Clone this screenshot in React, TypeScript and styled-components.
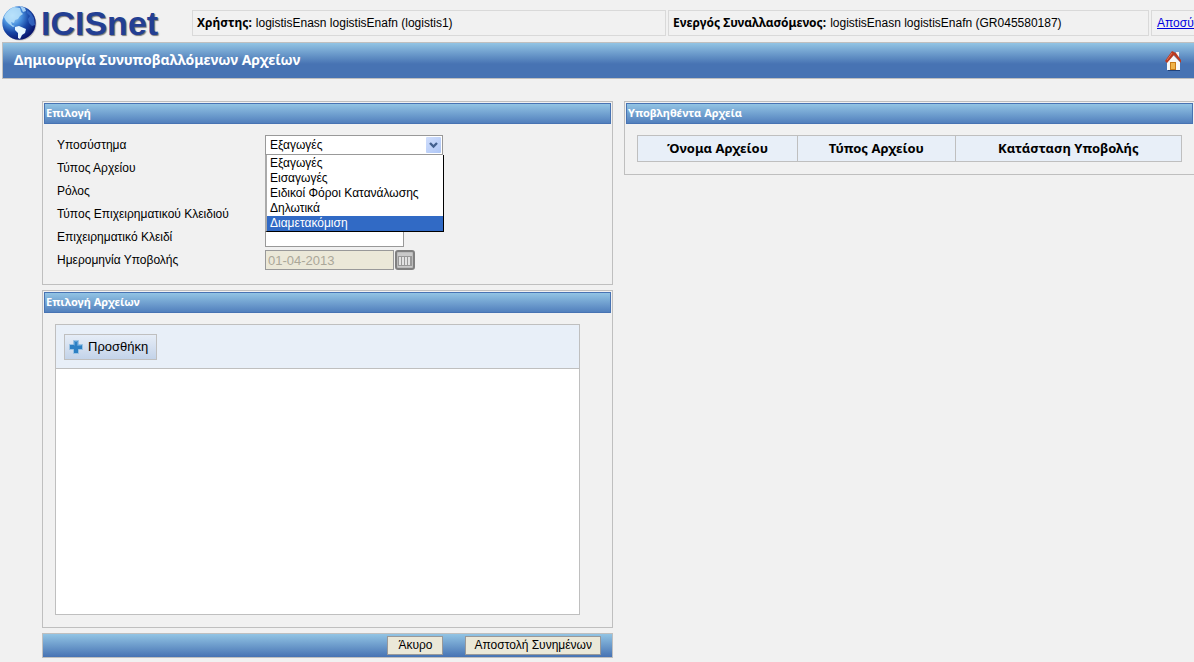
import React, { useState } from "react";
import styled, { createGlobalStyle } from "styled-components";

const GlobalStyle = createGlobalStyle`
  * { box-sizing: border-box; }
  body {
    margin: 0;
    background: #f1f1f1;
    color: #000;
    font: 12px/16px "Liberation Sans", Arial, sans-serif;
    overflow-x: hidden;
  }
  input, select, button { font: inherit; color: inherit; margin: 0; }
`;

const boldFont = `"Noto Sans", "Open Sans", sans-serif`;
const line = "#bfbfbf";

const Page = styled.div`
  overflow: hidden;
  padding-bottom: 4px;
`;

const TopBar = styled.header`
  display: flex;
  align-items: center;
  gap: 2px;
  height: 42px;
  padding-top: 4px;
`;

const Logo = styled.a`
  display: flex;
  align-items: center;
  gap: 4px;
  flex: 0 0 190px;
  padding-left: 1px;
  color: #233f93;
  font-size: 34px;
  font-weight: bold;
  line-height: 36px;
  text-decoration: none;
  text-shadow: 1px 1px 1px #777;
`;

const InfoCell = styled.div<{ $grow: number }>`
  flex: ${(p) => p.$grow} 1 0;
  min-width: 0;
  height: 26px;
  padding: 4px;
  border: 1px solid #d9d9d9;
  white-space: nowrap;
  overflow: hidden;

  strong { font-family: ${boldFont}; margin-right: 4px; }
`;

const ExitCell = styled(InfoCell)`
  flex: 0 0 43px;
  padding: 4px 0 4px 5px;
  border-right: 0;

  a { color: #0000e0; }
`;

const TitleBar = styled.div`
  display: flex;
  align-items: center;
  justify-content: space-between;
  height: 37px;
  margin-left: 2px;
  padding: 0 12px 0 11px;
  border: 1px solid ${line};
  border-right: 0;
  background: linear-gradient(#92c4e4, #4773b3 60%, #4773b3);
`;

const Title = styled.h1`
  margin: 0;
  padding-bottom: 2px;
  color: #fff;
  font: bold 14px/20px ${boldFont};
`;

const HomeLink = styled.a`
  display: flex;
`;

const Columns = styled.main`
  display: grid;
  grid-template-columns: minmax(0, 1fr) minmax(0, 1fr);
  align-items: start;
  gap: 11px;
  margin: 22px -1px 0 42px;
`;

const Stack = styled.div`
  display: flex;
  flex-direction: column;
  gap: 5px;
`;

const Panel = styled.section`
  padding: 1px;
  border: 1px solid ${line};
`;

const PanelTitle = styled.h2`
  margin: 0;
  padding: 0 1px 1px;
  border: 1px solid #4773b3;
  background: linear-gradient(#92c4e4, #5280bd);
  color: #fff;
  font: bold 11px/18px ${boldFont};
`;

const Form = styled.form`
  display: grid;
  grid-template-columns: 208px 1fr;
  grid-auto-rows: 20px;
  row-gap: 3px;
  align-items: center;
  padding: 11px 13px 13px;
`;

const Field = styled.div`
  position: relative;
  display: flex;
  align-items: center;
  gap: 1px;
`;

const SelectWrap = styled.div`
  position: relative;
  width: 178px;
`;

const Select = styled.select`
  display: block;
  appearance: none;
  width: 100%;
  height: 20px;
  padding: 0 4px;
  border: 1px solid #999;
  border-radius: 0;
  background: #fff;
`;

const SelectArrow = styled.span`
  position: absolute;
  top: 2px;
  right: 2px;
  display: flex;
  align-items: center;
  justify-content: center;
  width: 15px;
  height: 16px;
  border-radius: 1px;
  background: linear-gradient(135deg, #d0defc, #aec6f6);
  pointer-events: none;
`;

const OptionList = styled.ul`
  position: absolute;
  z-index: 2;
  top: 100%;
  left: 0;
  width: 179px;
  margin: 0;
  padding: 1px 0 0;
  list-style: none;
  border: 1px solid #000;
  border-top: 0;
  border-left: 2px solid #aaa;
  background: #fff;
`;

const Option = styled.li<{ $active: boolean }>`
  padding: 0 3px;
  line-height: 15px;
  color: ${(p) => (p.$active ? "#fff" : "#000")};
  background: ${(p) => (p.$active ? "#316ac5" : "#fff")};
`;

const TextBox = styled.input<{ $width: number }>`
  width: ${(p) => p.$width}px;
  height: 20px;
  padding: 0 2px;
  border: 1px solid #999;
  background: #fff;

  &:disabled { background: #ebe8d8; color: #aaa799; font-size: 13px; }
`;

const CalendarButton = styled.button`
  display: flex;
  align-items: center;
  justify-content: center;
  width: 20px;
  height: 20px;
  padding: 0;
  border: 2px solid #808080;
  border-radius: 3px;
  background: #bbb;
`;

const FilePanel = styled.div`
  margin: 11px 31px 11px 11px;
  border: 1px solid ${line};
  background: #fff;
`;

const FileToolbar = styled.div`
  padding: 9px 8px 8px;
  border-bottom: 1px solid ${line};
  background: #e8eff8;
`;

const AddButton = styled.button`
  display: flex;
  align-items: center;
  gap: 5px;
  height: 26px;
  padding: 0 8px 0 4px;
  border: 1px solid ${line};
  background: linear-gradient(#e6edf7, #c3d3e9);
  font-size: 13px;
`;

const FileList = styled.div`
  height: 245px;
`;

const ActionBar = styled.footer`
  display: flex;
  justify-content: flex-end;
  gap: 22px;
  padding: 2px 11px;
  border: 1px solid ${line};
  background: linear-gradient(#92c4e4, #4773b3);
`;

const ActionButton = styled.button`
  min-width: 56px;
  height: 19px;
  padding: 0 8px;
  border: 1px solid #999;
  background: #ebe8d8;
  line-height: 17px;
`;

const Table = styled.table`
  width: calc(100% - 22px);
  margin: 11px;
  border-collapse: collapse;
  table-layout: fixed;

  th {
    height: 26px;
    padding: 0 0 2px;
    border: 1px solid ${line};
    background: #e8eff8;
    font: bold 13px/18px ${boldFont};
  }
`;

function Globe() {
  return (
    <svg width="36" height="36" viewBox="0 0 36 36" aria-hidden="true">
      <defs>
        <radialGradient id="sea" cx="30%" cy="28%" r="78%">
          <stop offset="0" stopColor="#b5ddfa" />
          <stop offset="0.35" stopColor="#4b93df" />
          <stop offset="0.65" stopColor="#1745a5" />
          <stop offset="1" stopColor="#08126a" />
        </radialGradient>
      </defs>
      <circle cx="19" cy="19" r="16.5" fill="#888" opacity="0.45" />
      <circle cx="18" cy="18" r="16.7" fill="url(#sea)" />
      <path d="M3 12 Q6 5 13 2 L19 3 L20 7 L22 9 L19 11 L17 14 L14 15 L13 18 L10 17 L11 20 L14 21 L12 22 L8 19 L5 16Z" fill="#b9e2fa" opacity="0.85" />
      <path d="M14 22 L18 21 L25 24 L24 28 L21 30 L19 34 L17 33 L17 28 L14 25Z" fill="#e6f6ff" />
      <path d="M26 5 L30 8 L33 13 L34 20 L31 21 L28 18 L27 14 L29 11 L26 8Z" fill="#3c72cc" opacity="0.75" />
      <path d="M19 1 L24 3 L25 6 L22 7Z" fill="#a8d2f6" />
    </svg>
  );
}

function HomeIcon() {
  return (
    <svg width="17" height="20" viewBox="0 0 17 20" aria-hidden="true">
      <rect x="3" y="18" width="12" height="2" fill="#17366b" opacity="0.8" />
      <path d="M11 1 H14 V8 L11 5Z" fill="#f4f4f4" />
      <path d="M2 11 L8 4 L15 11 V19 H2Z" fill="#f8f8f8" />
      <path d="M0 10 L7 0 L11 2 L16 9 V12 L9 4 L2 12Z" fill="#b93a20" />
      <path d="M2 9 L7 2" stroke="#e0725a" />
      <rect x="5" y="11" width="6" height="8" fill="#c77a18" />
      <rect x="6" y="12" width="4" height="6" fill="#efb34a" />
    </svg>
  );
}

function PlusIcon() {
  return (
    <svg width="14" height="14" viewBox="0 0 14 14" aria-hidden="true">
      <path d="M4.5 0.5 H9.5 V4.5 H13.5 V9.5 H9.5 V13.5 H4.5 V9.5 H0.5 V4.5 H4.5Z" fill="#2c80c4" stroke="#9ac3e4" />
      <path d="M5.5 5.5 V1.5 H8.5 V5.5 H12.5" fill="none" stroke="#5b9fd6" />
    </svg>
  );
}

const subsystems = [
  "Εξαγωγές",
  "Εισαγωγές",
  "Ειδικοί Φόροι Κατανάλωσης",
  "Δηλωτικά",
  "Διαμετακόμιση",
];

function DropDown(props: { id: string; options: string[]; open?: boolean }) {
  const [value, setValue] = useState(props.options[0]);
  const [open, setOpen] = useState(Boolean(props.open));
  const choose = (option: string) => {
    setValue(option);
    setOpen(false);
  };
  return (
    <SelectWrap>
      <Select id={props.id} value={value} onChange={(e) => choose(e.target.value)}>
        {props.options.map((o) => (
          <option key={o}>{o}</option>
        ))}
      </Select>
      <SelectArrow>
        <svg width="9" height="7" viewBox="0 0 9 7" aria-hidden="true">
          <path d="M1 1 L4.5 4.5 L8 1" fill="none" stroke="#43608f" strokeWidth="2.4" />
        </svg>
      </SelectArrow>
      {open && (
        <OptionList role="listbox">
          {props.options.map((o, i) => (
            <Option
              key={o}
              role="option"
              $active={i === props.options.length - 1}
              onClick={() => choose(o)}
            >
              {o}
            </Option>
          ))}
        </OptionList>
      )}
    </SelectWrap>
  );
}

export default function App() {
  return (
    <Page>
      <GlobalStyle />
      <TopBar>
        <Logo href="#">
          <Globe />
          ICISnet
        </Logo>
        <InfoCell $grow={474}>
          <strong>Χρήστης:</strong>
          logistisEnasn logistisEnafn (logistis1)
        </InfoCell>
        <InfoCell $grow={481}>
          <strong>Ενεργός Συναλλασόμενος:</strong>
          logistisEnasn logistisEnafn (GR045580187)
        </InfoCell>
        <ExitCell $grow={0}>
          <a href="#">Αποσύνδεση</a>
        </ExitCell>
      </TopBar>
      <TitleBar>
        <Title>Δημιουργία Συνυποβαλλόμενων Αρχείων</Title>
        <HomeLink href="#" aria-label="Home">
          <HomeIcon />
        </HomeLink>
      </TitleBar>
      <Columns>
        <Stack>
          <Panel>
            <PanelTitle>Επιλογή</PanelTitle>
            <Form>
              <label htmlFor="subsystem">Υποσύστημα</label>
              <Field>
                <DropDown id="subsystem" options={subsystems} open />
              </Field>
              <label htmlFor="fileType">Τύπος Αρχείου</label>
              <Field>
                <DropDown id="fileType" options={[""]} />
              </Field>
              <label htmlFor="role">Ρόλος</label>
              <Field>
                <DropDown id="role" options={[""]} />
              </Field>
              <label htmlFor="keyType">Τύπος Επιχειρηματικού Κλειδιού</label>
              <Field>
                <DropDown id="keyType" options={[""]} />
              </Field>
              <label htmlFor="key">Επιχειρηματικό Κλειδί</label>
              <Field>
                <TextBox id="key" $width={139} />
              </Field>
              <label htmlFor="date">Ημερομηνία Υποβολής</label>
              <Field>
                <TextBox id="date" $width={129} value="01-04-2013" disabled readOnly />
                <CalendarButton type="button" aria-label="Ημερολόγιο">
                  <svg width="14" height="14" viewBox="0 0 14 14" aria-hidden="true">
                    <rect width="14" height="14" fill="#c9c9c9" />
                    <rect y="3" width="14" height="10" fill="#989898" />
                    <path d="M2 4 V12 M5 4 V12 M8 4 V12 M11 4 V12" stroke="#e2e2e2" strokeWidth="2" />
                  </svg>
                </CalendarButton>
              </Field>
            </Form>
          </Panel>
          <Panel>
            <PanelTitle>Επιλογή Αρχείων</PanelTitle>
            <FilePanel>
              <FileToolbar>
                <AddButton type="button">
                  <PlusIcon />
                  Προσθήκη
                </AddButton>
              </FileToolbar>
              <FileList />
            </FilePanel>
          </Panel>
          <ActionBar>
            <ActionButton type="button">Άκυρο</ActionButton>
            <ActionButton type="button">Αποστολή Συνημένων</ActionButton>
          </ActionBar>
        </Stack>
        <Panel>
          <PanelTitle>Υποβληθέντα Αρχεία</PanelTitle>
          <Table>
            <colgroup>
              <col style={{ width: "29.4%" }} />
              <col style={{ width: "29%" }} />
              <col />
            </colgroup>
            <thead>
              <tr>
                <th scope="col">Όνομα Αρχείου</th>
                <th scope="col">Τύπος Αρχείου</th>
                <th scope="col">Κατάσταση Υποβολής</th>
              </tr>
            </thead>
          </Table>
        </Panel>
      </Columns>
    </Page>
  );
}
